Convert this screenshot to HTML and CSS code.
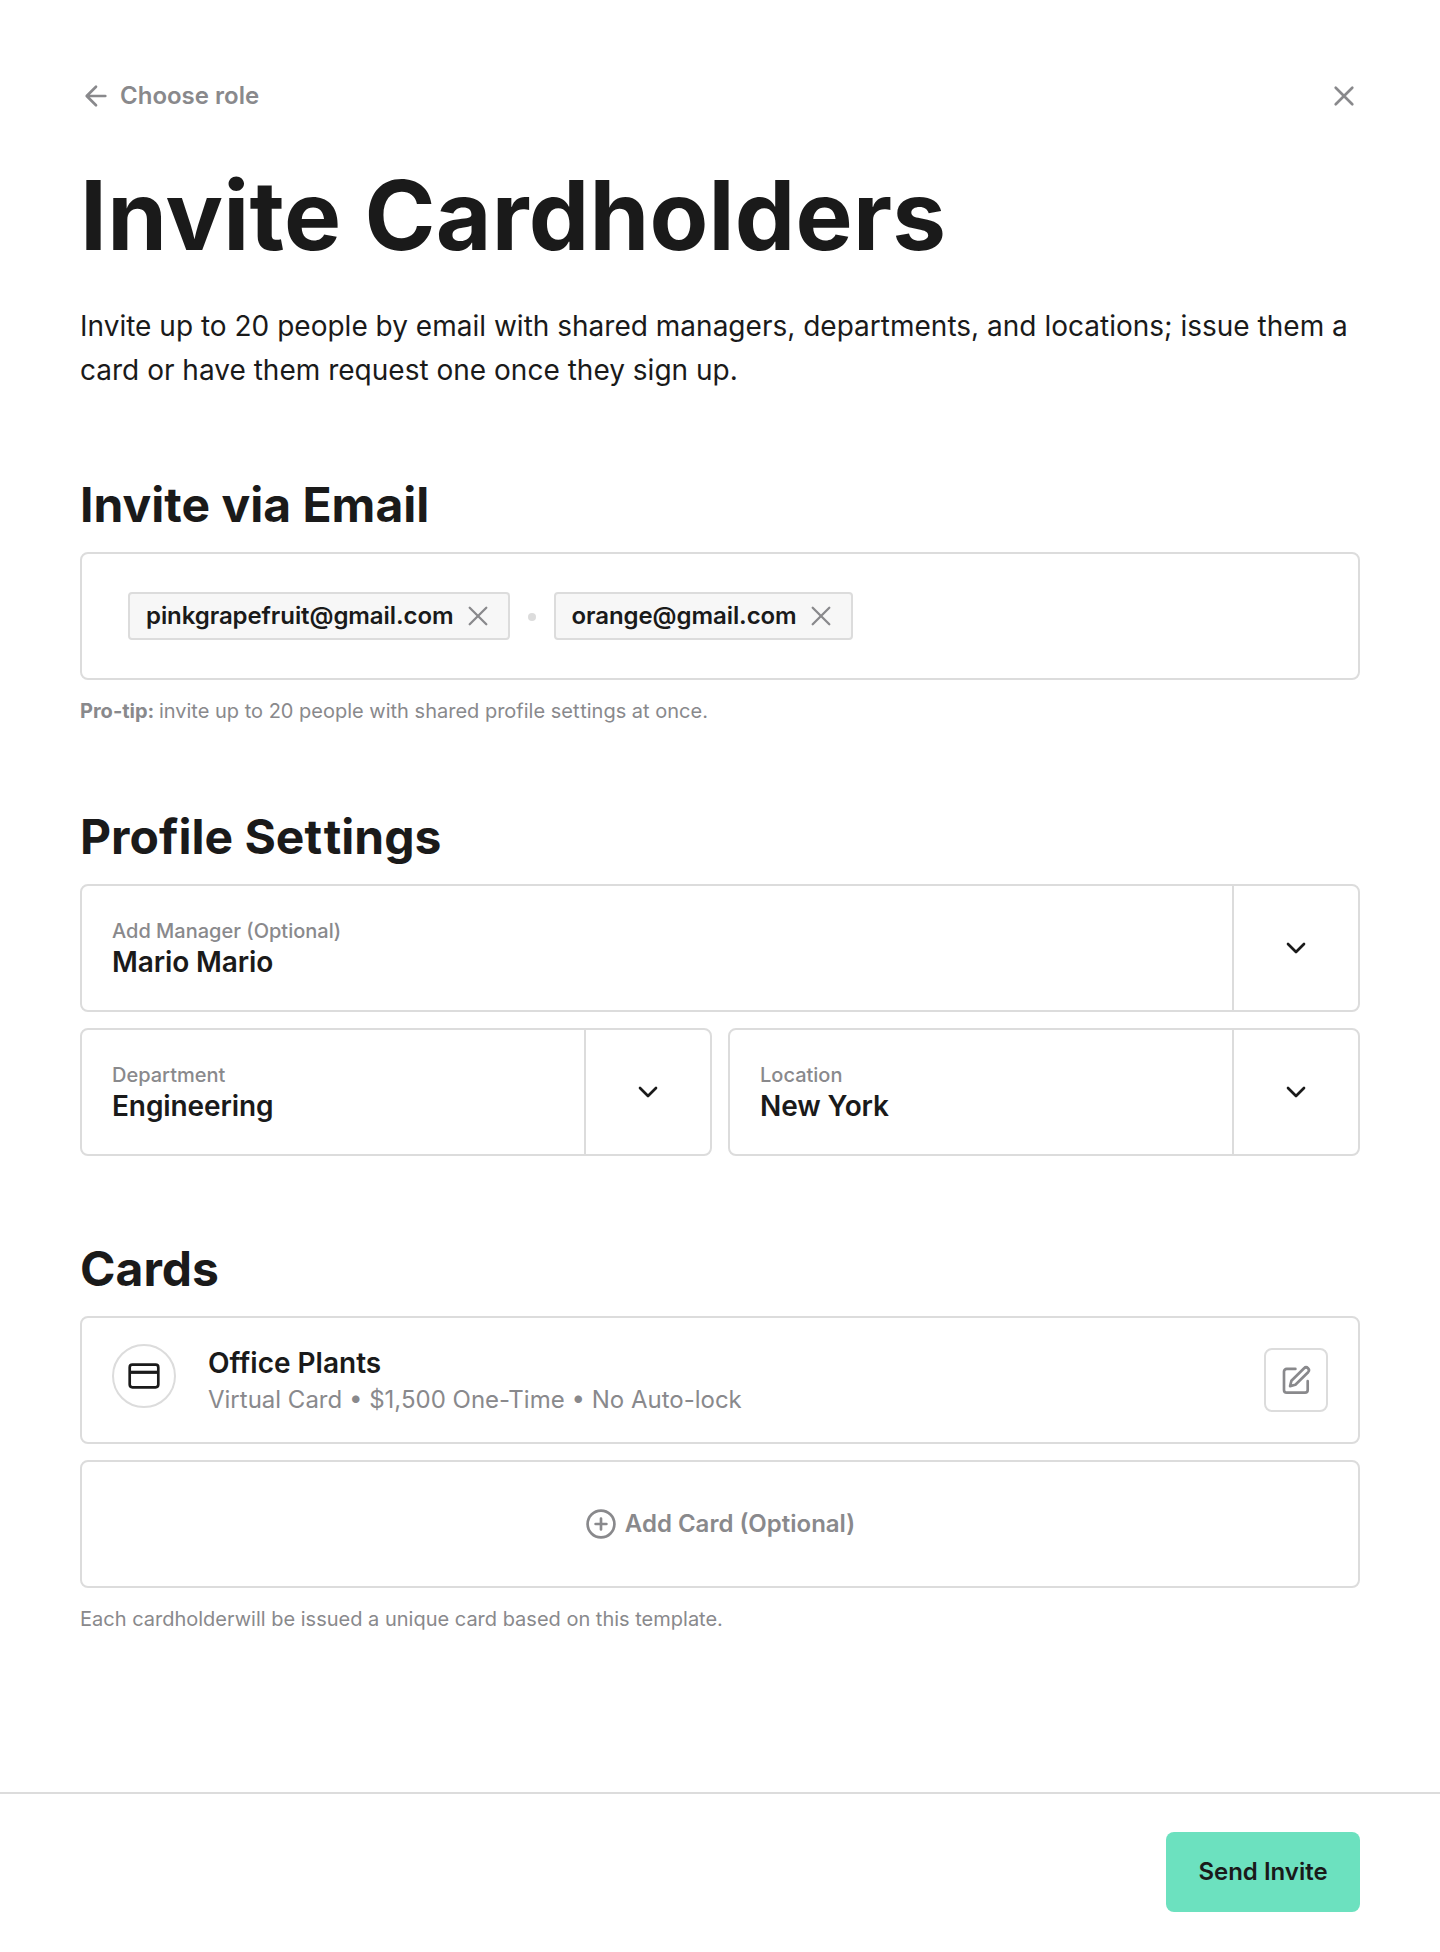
FILE: index.html
```html
<!DOCTYPE html>
<html lang="en">
<head>
<meta charset="utf-8">
<title>Invite Cardholders</title>
<link rel="stylesheet" href="styles.css">
</head>
<body>
<main class="page">
  <header class="topbar">
    <a class="back">
      <svg class="icon" width="32" height="32" viewBox="0 0 32 32"><path d="M25.300 16H6.900M16 6.700 6.700 16l9.300 9.300"/></svg>
      <span>Choose role</span>
    </a>
    <button class="close" aria-label="Close">
      <svg class="icon" width="32" height="32" viewBox="0 0 32 32"><path d="M7.700 7.700l16.600 16.600M24.300 7.700l-16.600 16.600"/></svg>
    </button>
  </header>
  <h1 class="title">Invite Cardholders</h1>
  <p class="lead">Invite up to 20 people by email with shared managers, departments, and locations; issue them a card or have them request one once they sign up.</p>

  <section class="section section-email">
    <h2 class="heading">Invite via Email</h2>
    <div class="box emails">
      <span class="chip"><span class="mail">pinkgrapefruit@gmail.com</span><svg class="icon" width="32" height="32" viewBox="0 0 32 32"><path d="M7.700 7.700l16.600 16.600M24.300 7.700l-16.600 16.600"/></svg></span>
      <span class="dot"></span>
      <span class="chip"><span class="mail">orange@gmail.com</span><svg class="icon" width="32" height="32" viewBox="0 0 32 32"><path d="M7.700 7.700l16.600 16.600M24.300 7.700l-16.600 16.600"/></svg></span>
    </div>
    <p class="hint"><b>Pro-tip:</b> invite up to 20 people with shared profile se<span class="pair">t</span>tings at once.</p>
  </section>

  <section class="section section-profile">
    <h2 class="heading">Profile Se<span class="pair">t</span>tings</h2>
    <div class="grid">
      <div class="box select wide">
        <div class="field"><span class="label">Add Manager (Optional)</span><span class="value">Mario Mario</span></div>
        <div class="toggle"><svg class="icon dark" width="32" height="32" viewBox="0 0 32 32"><path d="M8 12l8 8 8-8"/></svg></div>
      </div>
      <div class="box select">
        <div class="field"><span class="label">Department</span><span class="value">Engineering</span></div>
        <div class="toggle"><svg class="icon dark" width="32" height="32" viewBox="0 0 32 32"><path d="M8 12l8 8 8-8"/></svg></div>
      </div>
      <div class="box select">
        <div class="field"><span class="label">Location</span><span class="value">New York</span></div>
        <div class="toggle"><svg class="icon dark" width="32" height="32" viewBox="0 0 32 32"><path d="M8 12l8 8 8-8"/></svg></div>
      </div>
    </div>
  </section>

  <section class="section section-cards">
    <h2 class="heading">Cards</h2>
    <div class="grid">
      <div class="box card wide">
        <div class="badge"><svg class="icon dark" width="32" height="32" viewBox="0 0 32 32"><rect x="1.700" y="4.700" width="28.600" height="22.600" rx="2.700"/><path class="band" d="M2 12.300h28"/></svg></div>
        <div class="info"><span class="name">Office Plants</span><span class="meta">Virtual Card • $1,500 One-Time • No Auto-lock</span></div>
        <button class="edit" aria-label="Edit card"><svg class="icon" width="32" height="32" viewBox="0 0 32 32"><path d="M15.400 4.900H6.700A2.700 2.700 0 0 0 4 7.600v18.400a2.700 2.700 0 0 0 2.700 2.700h18.300a2.700 2.700 0 0 0 2.700-2.700V17.200"/><path d="M24.100 4.200a2.830 2.830 0 0 1 4 4L15.400 20.800l-5.300 1.300 1.300-5.300z"/></svg></button>
      </div>
      <button class="box add wide">
        <svg class="icon" width="32" height="32" viewBox="0 0 32 32"><circle cx="16" cy="16" r="13.400"/><path d="M16 10.600v10.800M10.600 16h10.800"/></svg>
        <span>Add Card (Optional)</span>
      </button>
    </div>
    <p class="hint">Each cardholderwill be issued a unique card based on this template.</p>
  </section>
</main>
<footer class="footer"><button class="send">Send Invite</button></footer>
</body>
</html>
```

FILE: styles.css
```css
* { box-sizing: border-box; margin: 0; padding: 0; }
body { background: #fff; color: #1a1a1a; font-family: Inter, "Liberation Sans", sans-serif; min-height: 1952px; display: flex; flex-direction: column; }
button { font: inherit; color: inherit; background: none; border: 0; }
.page { padding: 80px 80px 0; flex: 1; }
.icon { display: block; flex: none; fill: none; stroke: #89898c; stroke-width: 2.67; stroke-linecap: round; stroke-linejoin: round; }
.icon.dark { stroke: #1a1a1a; }
.icon .band { stroke-width: 3.2; stroke-linecap: butt; }

.topbar { display: flex; justify-content: space-between; align-items: center; height: 32px; }
.back { display: flex; align-items: center; gap: 8px; font-size: 24px; line-height: 32px; font-weight: 600; color: #89898c; }
.title { margin-top: 47px; font-size: 96px; line-height: 112px; font-weight: 700; letter-spacing: 0.24px; }
.lead { margin-top: 33px; font-size: 28px; line-height: 44px; letter-spacing: 0.01px; }

.section-email { margin-top: 81px; }
.section-profile { margin-top: 78px; }
.section-cards { margin-top: 81px; }
.heading { font-size: 48px; line-height: 64px; font-weight: 700; margin-bottom: 15px; }
.pair { letter-spacing: 0.035em; }
.box { border: 2px solid #dcdcdc; border-radius: 8px; height: 128px; display: flex; align-items: center; }
.emails { padding-left: 46px; gap: 18px; }
.chip { display: flex; align-items: center; height: 48px; padding: 0 13.5px 0 16px; border: 2px solid #dcdcdc; border-radius: 4px; background: #f7f7f7; gap: 8.5px; font-size: 24px; line-height: 32px; font-weight: 600; letter-spacing: -0.08px; }
.chip .icon { stroke-width: 2.3; }
.dot { width: 8px; height: 8px; margin-top: 2px; border-radius: 50%; background: #dcdcdc; }
.hint { margin-top: 15px; font-size: 20px; line-height: 32px; color: #89898c; }
.hint b { margin-right: -1px; }

.grid { display: grid; grid-template-columns: 1fr 1fr; gap: 16px; }
.wide { grid-column: 1 / -1; }
.select { align-items: stretch; }
.field { flex: 1; padding: 31px 0 0 30px; display: flex; flex-direction: column; }
.label { font-size: 20px; line-height: 28px; font-weight: 500; color: #89898c; }
.value { font-size: 28px; line-height: 34px; font-weight: 600; letter-spacing: -0.1px; }
.toggle { width: 126px; border-left: 2px solid #dcdcdc; display: flex; align-items: center; justify-content: center; }

.card { padding: 0 30px; }
.badge { width: 64px; height: 64px; margin: 0 32px 8px 0; border: 2px solid #dcdcdc; border-radius: 50%; display: flex; align-items: center; justify-content: center; }
.info { flex: 1; display: flex; flex-direction: column; }
.name { margin-top: -3px; font-size: 28px; line-height: 42px; font-weight: 600; }
.meta { font-size: 24px; line-height: 32px; color: #89898c; }
.edit { width: 64px; height: 64px; border: 2px solid #dcdcdc; border-radius: 8px; display: flex; align-items: center; justify-content: center; }
.add { justify-content: center; gap: 8px; font-size: 24px; line-height: 32px; font-weight: 600; color: #89898c; }

.footer { height: 160px; border-top: 2px solid #dcdcdc; padding: 38px 80px 0; display: flex; justify-content: flex-end; }
.send { width: 194px; height: 80px; border-radius: 8px; background: #6ce1bf; font-size: 24px; line-height: 32px; font-weight: 600; }
```
